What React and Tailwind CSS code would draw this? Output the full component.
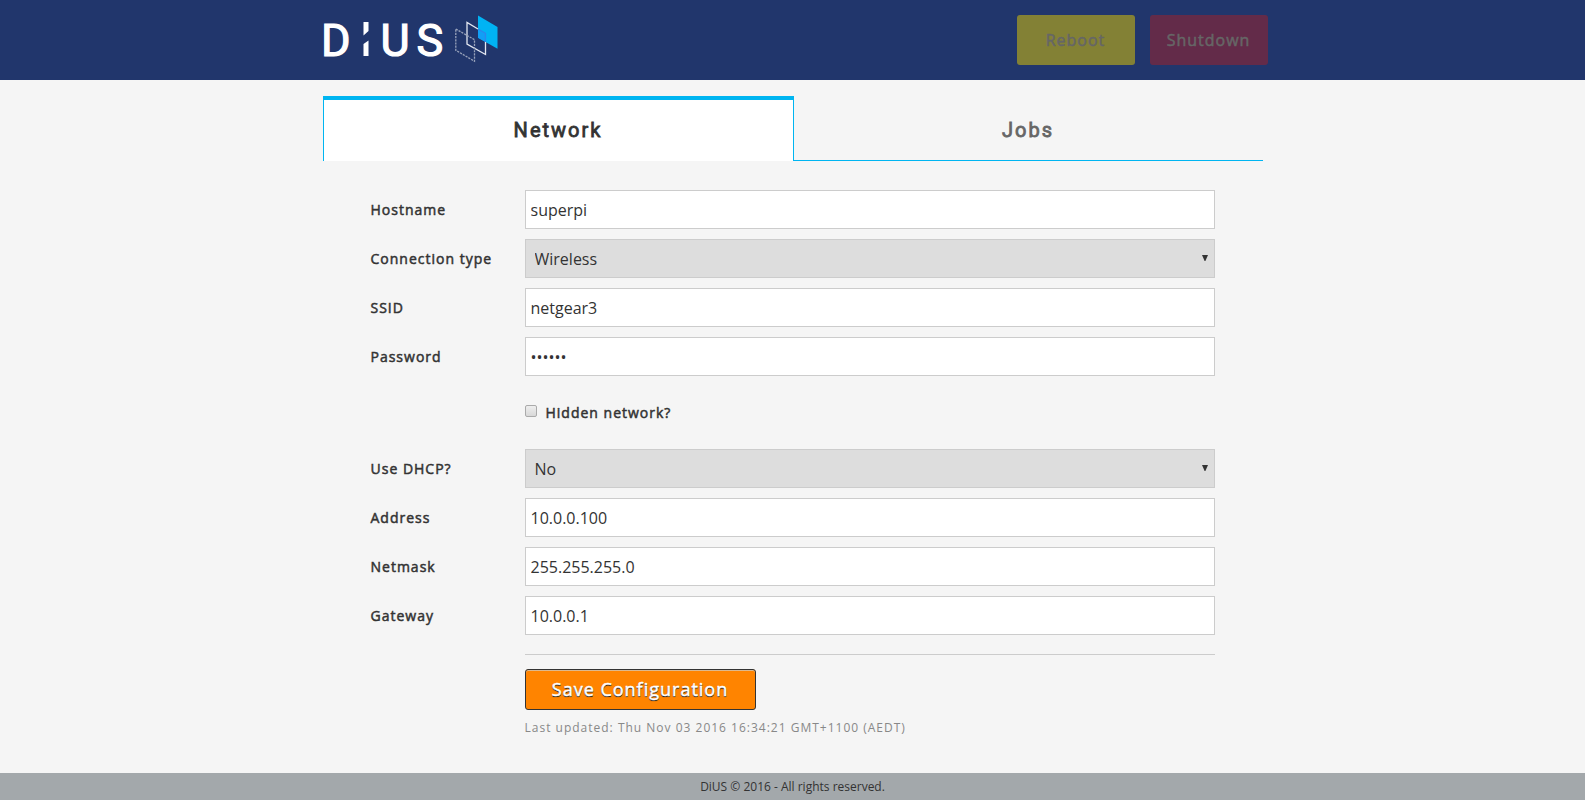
import React from "react";

const FIELD =
  "h-[39px] w-full rounded-none border border-[#ccc] bg-white px-[5px] text-base text-[#333] outline-none";
const LABEL = "text-sm tracking-[1px] text-[#333] [-webkit-text-stroke:0.5px_#333]";
const POWER =
  "h-[50px] w-[118px] rounded-[3px] text-base tracking-[1px] text-[#666] [-webkit-text-stroke:0.5px_#666]";

function Row({ id, label, children }) {
  return (
    <div className="flex items-center">
      <label htmlFor={id} className={`w-[154px] shrink-0 ${LABEL}`}>
        {label}
      </label>
      <div className="relative min-w-0 flex-1">{children}</div>
    </div>
  );
}

function TextRow({ id, label, value, type = "text" }) {
  return (
    <Row id={id} label={label}>
      <input id={id} type={type} defaultValue={value} className={`block ${FIELD}`} />
    </Row>
  );
}

function SelectRow({ id, label, value, options }) {
  return (
    <Row id={id} label={label}>
      <select
        id={id}
        defaultValue={value}
        className="block h-[39px] w-full appearance-none rounded-none border border-[#ccc] bg-[#ddd] px-[9px] text-base text-[#333] outline-none"
      >
        {options.map((o) => (
          <option key={o}>{o}</option>
        ))}
      </select>
      <svg
        className="pointer-events-none absolute top-4 right-[7px] h-1.5 w-1.5"
        viewBox="0 0 6 6"
        aria-hidden="true"
      >
        <path d="M0 0h6L3.4 6h-.8z" fill="#333" />
      </svg>
    </Row>
  );
}

function Logo() {
  return (
    <svg width="184" height="64" viewBox="-4 0 184 64" role="img" aria-label="DiUS">
      <g
        fill="#fff"
        fontFamily="Roboto, sans-serif"
        fontSize="45"
        fontWeight="400"
        stroke="#fff"
        strokeWidth="1.2"
      >
        <text x="-2" y="47.500">D</text>
        <text x="57.500" y="47.500">U</text>
        <text x="93.500" y="47.500">S</text>
      </g>
      <path d="M40.500 14h5v9l-5 4.500zM45.500 32.500v15.500h-5V36z" fill="#fff" />
      <path d="M155 7.500L174.500 19v21.700L155 29.700z" fill="#00b3f4" />
      <path d="M155 21L162.500 25.300V34L155 29.700z" fill="#119ff5" />
      <path d="M155 21L162.500 25.300V34" fill="none" stroke="#2b86ee" strokeWidth="1.300" />
      <path d="M155 21L144 14.500V36l18.500 10.500V34" fill="none" stroke="#e4e8f2" strokeWidth="1.300" />
      <path d="M132.800 21l18.700 10.700v21.500l-18.700-10.900z" fill="none" stroke="#98a2ba" strokeWidth="1.300" strokeDasharray="2.200 1" />
    </svg>
  );
}

export default function App() {
  return (
    <div className="flex min-h-screen flex-col bg-[#f5f5f5] font-['Open_Sans',sans-serif] text-[#333]">
      <header className="bg-[#21366c]">
        <div className="mx-auto flex h-20 w-full max-w-[940px] items-center justify-between">
          <a href="#home" className="-ml-1 block">
            <Logo />
          </a>
          <div className="-mr-[5px] flex gap-[15px]">
            <button className={`bg-[#838135] ${POWER}`}>Reboot</button>
            <button className={`bg-[#632b49] ${POWER}`}>Shutdown</button>
          </div>
        </div>
      </header>

      <main className="mx-auto w-full max-w-[940px] flex-1 pt-4">
        <nav className="flex h-[65px] font-[Roboto,sans-serif] text-xl tracking-[2px]">
          <a
            href="#network"
            className="flex flex-1 items-center justify-center border-x border-t-4 border-[#00b5f1] bg-white pb-0.5 text-[#333] [-webkit-text-stroke:0.8px_#333]"
          >
            Network
          </a>
          <a
            href="#jobs"
            className="flex flex-1 items-center justify-center border-b border-[#00b5f1] pt-1 text-[#666] [-webkit-text-stroke:0.8px_#666]"
          >
            Jobs
          </a>
        </nav>

        <form className="flex flex-col gap-2.5 px-12 pt-[29px]">
          <TextRow id="hostname" label="Hostname" value="superpi" />
          <SelectRow id="conn" label="Connection type" value="Wireless" options={["Wireless", "Wired"]} />
          <TextRow id="ssid" label="SSID" value="netgear3" />
          <TextRow id="password" label="Password" value="secret" type="password" />
          <div className="ml-[154px] flex h-[53px] items-center gap-[9px]">
            <input
              id="hidden"
              type="checkbox"
              className="mb-[3px] h-3 w-3 appearance-none rounded-[2px] border border-[#aaa] bg-linear-to-b from-[#eee] to-[#d8d8d8]"
            />
            <label htmlFor="hidden" className={LABEL}>
              Hidden network?
            </label>
          </div>
          <SelectRow id="dhcp" label="Use DHCP?" value="No" options={["Yes", "No"]} />
          <TextRow id="address" label="Address" value="10.0.0.100" />
          <TextRow id="netmask" label="Netmask" value="255.255.255.0" />
          <TextRow id="gateway" label="Gateway" value="10.0.0.1" />
          <div className="mt-[9px] ml-[154px] border-t border-[#ccc] pt-3.5">
            <button
              type="button"
              className="block h-[41px] w-[231px] rounded-[3px] border border-[#333] bg-[#ff8400] pb-0.5 text-lg tracking-[1px] text-white shadow-[inset_0_1px_0_#ddb98e] [-webkit-text-stroke:0.5px_#fff] [text-shadow:0_1px_1px_#222,0_1px_0_#333]"
            >
              Save Configuration
            </button>
            <p className="mt-2 text-xs leading-5 tracking-[1px] text-[#888]">
              Last updated: Thu Nov 03 2016 16:34:21 GMT+1100 (AEDT)
            </p>
          </div>
        </form>
      </main>

      <footer className="bg-[#a3a8ab] text-center text-xs leading-[27px] text-[#333]">
        DiUS © 2016 - All rights reserved.
      </footer>
    </div>
  );
}
